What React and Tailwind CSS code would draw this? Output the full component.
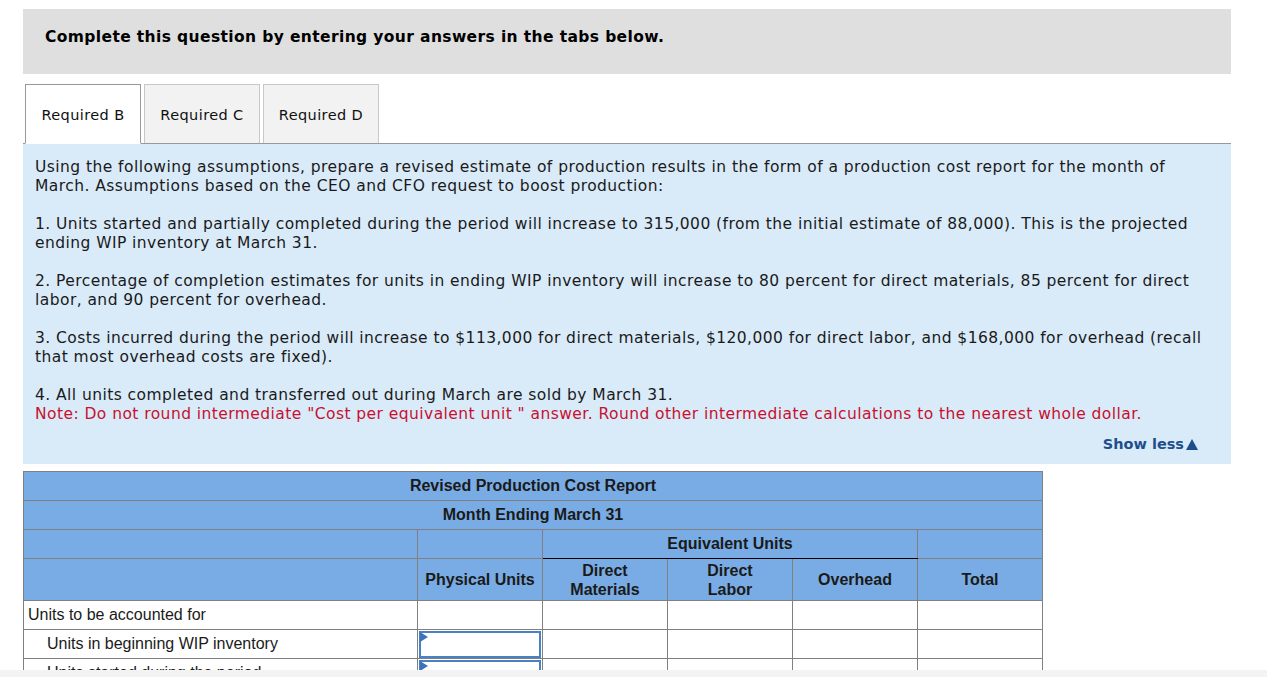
import React from "react";

const verdana = { fontFamily: '"DejaVu Sans", Verdana, sans-serif' };

function InputCell() {
  return (
    <td className="border border-[#808080] p-0 h-[29px]">
      <div className="relative h-[27px] mx-px border-2 border-[#4a80c4] bg-white">
        <span className="absolute left-[-1px] top-[-1px] w-0 h-0 border-t-[5px] border-b-[5px] border-l-[8px] border-t-transparent border-b-transparent border-l-[#3d74b9]" />
      </div>
    </td>
  );
}

function EmptyCell() {
  return <td className="border border-[#808080] h-[29px]" />;
}

export default function App() {
  const rows = [
    { label: "Units to be accounted for", indent: false, input: false },
    { label: "Units in beginning WIP inventory", indent: true, input: true },
    { label: "Units started during the period", indent: true, input: true },
    { label: "Total units to account for", indent: true, input: true },
  ];

  return (
    <div className="h-[677px] overflow-hidden bg-white flex flex-col">
      <div className="h-[670px] overflow-hidden px-[23px] pt-[9px] shrink-0">
        {/* header band */}
        <div className="w-[1208px] h-[65px] bg-[#dfdfdf] px-[22px] pt-[17px]" style={verdana}>
          <p className="text-[15.5px] font-bold tracking-[0.38px] text-black">
            Complete this question by entering your answers in the tabs below.
          </p>
        </div>

        {/* tabs */}
        <div className="w-[1208px] mt-[10px] flex items-end gap-[3px] pl-[2px] border-b border-[#999]" style={verdana}>
          <div className="h-[60px] w-[116px] -mb-px pt-[3px] bg-white border border-[#999] border-b-white flex items-center justify-center text-[14.5px] tracking-[0.4px] text-[#111]">
            Required B
          </div>
          <div className="h-[59px] w-[116px] pt-[3px] bg-[#f2f2f2] border border-[#c8c8c8] border-b-0 flex items-center justify-center text-[14.5px] tracking-[0.4px] text-[#111]">
            Required C
          </div>
          <div className="h-[59px] w-[116px] pt-[3px] bg-[#f2f2f2] border border-[#c8c8c8] border-b-0 flex items-center justify-center text-[14.5px] tracking-[0.4px] text-[#111]">
            Required D
          </div>
        </div>

        {/* instructions */}
        <div className="w-[1208px] h-[320px] bg-[#d9ebf9] pl-[12px] pr-[20px] pt-[14px] text-[15.5px] leading-[19px] tracking-[0.44px] text-[#1a1a1a]" style={verdana}>
          <p>
            Using the following assumptions, prepare a revised estimate of production results in the form of a production cost report for the month of March. Assumptions based on the CEO and CFO request to boost production:
          </p>
          <p className="mt-[19px]">
            1. Units started and partially completed during the period will increase to 315,000 (from the initial estimate of 88,000). This is the projected ending WIP inventory at March 31.
          </p>
          <p className="mt-[19px]">
            2. Percentage of completion estimates for units in ending WIP inventory will increase to 80 percent for direct materials, 85 percent for direct labor, and 90 percent for overhead.
          </p>
          <p className="mt-[19px]">
            3. Costs incurred during the period will increase to $113,000 for direct materials, $120,000 for direct labor, and $168,000 for overhead (recall that most overhead costs are fixed).
          </p>
          <p className="mt-[19px]">4. All units completed and transferred out during March are sold by March 31.</p>
          <p className="text-[#c8102e]">
            Note: Do not round intermediate "Cost per equivalent unit " answer. Round other intermediate calculations to the nearest whole dollar.
          </p>
          <div className="flex justify-end pr-[13px] mt-[11px] tracking-normal">
            <span className="text-[14.5px] font-bold text-[#1f4f8b] flex items-center gap-[2px]">
              Show less
              <span className="w-0 h-0 border-l-[6px] border-r-[6px] border-b-[11px] border-l-transparent border-r-transparent border-b-[#1f4f8b]" />
            </span>
          </div>
        </div>

        {/* report table */}
        <table
          className="mt-[7px] border-collapse text-[16px] text-[#1a1a1a]"
          style={{ fontFamily: '"Liberation Sans", Arial, sans-serif' }}
        >
          <colgroup>
            <col className="w-[394px]" />
            <col className="w-[125px]" />
            <col className="w-[125px]" />
            <col className="w-[125px]" />
            <col className="w-[125px]" />
            <col className="w-[125px]" />
          </colgroup>
          <thead>
            <tr className="bg-[#79ace4]">
              <th colSpan={6} className="border border-[#808080] h-[29px] font-bold text-center">
                Revised Production Cost Report
              </th>
            </tr>
            <tr className="bg-[#79ace4]">
              <th colSpan={6} className="border border-[#808080] h-[29px] font-bold text-center">
                Month Ending March 31
              </th>
            </tr>
            <tr className="bg-[#79ace4]">
              <th className="border border-[#808080] h-[29px]" />
              <th className="border border-[#808080]" />
              <th colSpan={3} className="border border-[#808080] border-b-black font-bold text-center">
                Equivalent Units
              </th>
              <th className="border border-[#808080]" />
            </tr>
            <tr className="bg-[#79ace4] leading-[19px]">
              <th className="border border-[#808080] h-[42px]" />
              <th className="border border-[#808080] font-bold">Physical Units</th>
              <th className="border border-[#808080] border-t-black font-bold">
                Direct
                <br />
                Materials
              </th>
              <th className="border border-[#808080] border-t-black font-bold">
                Direct
                <br />
                Labor
              </th>
              <th className="border border-[#808080] border-t-black font-bold">Overhead</th>
              <th className="border border-[#808080] font-bold">Total</th>
            </tr>
          </thead>
          <tbody>
            {rows.map((r) => (
              <tr key={r.label}>
                <td className={`border border-[#808080] h-[29px] ${r.indent ? "pl-[23px]" : "pl-[4px]"}`}>
                  {r.label}
                </td>
                {r.input ? <InputCell /> : <EmptyCell />}
                <EmptyCell />
                <EmptyCell />
                <EmptyCell />
                <EmptyCell />
              </tr>
            ))}
          </tbody>
        </table>
      </div>
      <div className="flex-1 bg-[#f3f3f3]" />
    </div>
  );
}
